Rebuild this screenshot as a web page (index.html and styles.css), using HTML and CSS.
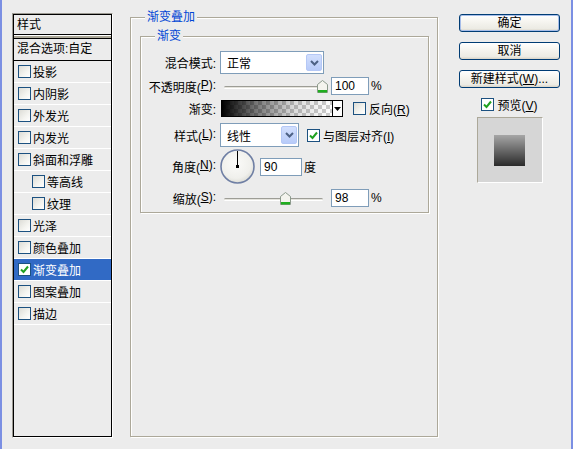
FILE: index.html
```html
<!DOCTYPE html>
<html lang="zh-CN">
<head>
<meta charset="utf-8">
<title>图层样式</title>
<link rel="stylesheet" href="styles.css">
</head>
<body>
<div class="window">
  <div class="panel">
    <div class="panel-in">
      <div class="ph">样式</div>
      <div class="psep"></div>
      <div class="pblend">混合选项:自定</div>
      <ul class="plist">
        <li><span class="cb"></span>投影</li>
        <li><span class="cb"></span>内阴影</li>
        <li><span class="cb"></span>外发光</li>
        <li><span class="cb"></span>内发光</li>
        <li><span class="cb"></span>斜面和浮雕</li>
        <li class="ind"><span class="cb"></span>等高线</li>
        <li class="ind"><span class="cb"></span>纹理</li>
        <li><span class="cb"></span>光泽</li>
        <li><span class="cb"></span>颜色叠加</li>
        <li class="sel"><span class="cb on"><svg viewBox="0 0 11 11" width="11" height="11"><path d="M2 5.5 L4.5 8 L9 2.5" fill="none" stroke="#21a121" stroke-width="2"/></svg></span>渐变叠加</li>
        <li><span class="cb"></span>图案叠加</li>
        <li><span class="cb"></span>描边</li>
      </ul>
    </div>
  </div>

  <fieldset class="grp outer">
    <legend>渐变叠加</legend>
    <fieldset class="grp inner">
      <legend>渐变</legend>
      <div class="row r1">
        <span class="lbl">混合模式:</span>
        <div class="combo w-mode"><span class="ctext">正常</span><span class="cbtn"><svg viewBox="0 0 9 6" width="9" height="6"><path d="M1 1 L4.5 4.5 L8 1" fill="none" stroke="#4d6185" stroke-width="2"/></svg></span></div>
      </div>
      <div class="row r2">
        <span class="lbl">不透明度(<u>P</u>):</span>
        <div class="slider"><div class="track"></div><span class="thumb" style="left:93px"><svg viewBox="0 0 11 13" width="11" height="13"><path d="M0.5 4.5 L5.5 0.5 L10.5 4.5 L10.5 12.5 L0.5 12.5 Z" fill="#f4f4ee" stroke="#8c9a8c"/><rect x="1" y="10" width="9" height="2.5" fill="#1fae1f"/></svg></span></div>
        <span class="field w-num">100</span><span class="unit">%</span>
      </div>
      <div class="row r3">
        <span class="lbl">渐变:</span>
        <div class="grad"><span class="gstrip"></span><span class="gbtn"><svg viewBox="0 0 7 4" width="7" height="4"><path d="M0 0 H7 L3.5 4 Z" fill="#000"/></svg></span></div>
        <span class="cb ml-rev"></span><span class="ctl-text">反向(<u>R</u>)</span>
      </div>
      <div class="row r4">
        <span class="lbl">样式(<u>L</u>):</span>
        <div class="combo w-style"><span class="ctext">线性</span><span class="cbtn"><svg viewBox="0 0 9 6" width="9" height="6"><path d="M1 1 L4.5 4.5 L8 1" fill="none" stroke="#4d6185" stroke-width="2"/></svg></span></div>
        <span class="cb on ml-align"><svg viewBox="0 0 11 11" width="11" height="11"><path d="M2 5.5 L4.5 8 L9 2.5" fill="none" stroke="#21a121" stroke-width="2"/></svg></span><span class="ctl-text">与图层对齐(<u>I</u>)</span>
      </div>
      <div class="row r5">
        <span class="lbl">角度(<u>N</u>):</span>
        <svg class="dial" viewBox="0 0 35 35" width="35" height="35">
          <defs><radialGradient id="dg" cx="0.45" cy="0.4" r="0.65"><stop offset="0" stop-color="#fbfbf9"/><stop offset="0.7" stop-color="#f0f0ec"/><stop offset="1" stop-color="#d8d8d0"/></radialGradient></defs>
          <circle cx="17.5" cy="17.5" r="16.5" fill="url(#dg)" stroke="#6f7fa4" stroke-width="1.6"/>
          <line x1="17.5" y1="17.5" x2="17.5" y2="2" stroke="#000" stroke-width="1"/>
          <rect x="16" y="16" width="3" height="3" fill="#000"/>
        </svg>
        <span class="field w-angle">90</span><span class="unit">度</span>
      </div>
      <div class="row r6">
        <span class="lbl">缩放(<u>S</u>):</span>
        <div class="slider"><div class="track"></div><span class="thumb" style="left:56px"><svg viewBox="0 0 11 13" width="11" height="13"><path d="M0.5 4.5 L5.5 0.5 L10.5 4.5 L10.5 12.5 L0.5 12.5 Z" fill="#f4f4ee" stroke="#8c9a8c"/><rect x="1" y="10" width="9" height="2.5" fill="#1fae1f"/></svg></span></div>
        <span class="field w-num">98</span><span class="unit">%</span>
      </div>
    </fieldset>
  </fieldset>

  <div class="side">
    <button class="btn default">确定</button>
    <button class="btn">取消</button>
    <button class="btn">新建样式(<u>W</u>)...</button>
    <div class="prev-row"><span class="cb on"><svg viewBox="0 0 11 11" width="11" height="11"><path d="M2 5.5 L4.5 8 L9 2.5" fill="none" stroke="#21a121" stroke-width="2"/></svg></span><span class="ctl-text">预览(<u>V</u>)</span></div>
    <div class="preview"><span class="swatch"></span></div>
  </div>
</div>
</body>
</html>
```
FILE: styles.css
```css
* { box-sizing: border-box; }
html, body { margin: 0; padding: 0; }
body {
  width: 573px;
  height: 449px;
  overflow: hidden;
  background: #ececec;
  font-family: "Liberation Sans", "Noto Sans CJK SC", sans-serif;
  font-size: 12px;
  color: #000;
}
u { text-decoration: underline; text-underline-offset: 1px; }

.window {
  display: flex;
  align-items: flex-start;
  height: 449px;
  border-left: 2px solid #7b8fe3;
  border-right: 2px solid #7b8fe3;
}

/* left style list */
.panel {
  margin-left: 10px;
  margin-top: 13px;
  width: 101px;
  height: 425px;
  border: 1px solid;
  border-color: #9c9a92 #fff #fff #9c9a92;
}
.panel-in {
  height: 100%;
  border: 1px solid #000;
}
.ph {
  height: 20px;
  line-height: 20px;
  padding-left: 3px;
  border-bottom: 1px solid #000;
}
.psep {
  height: 3px;
  border-top: 1px solid #fff;
  background: #aca899;
}
.pblend {
  height: 23px;
  line-height: 21px;
  padding-left: 3px;
  border-top: 1px solid #000;
  border-bottom: 1px solid #000;
  white-space: nowrap;
}
.plist {
  list-style: none;
  margin: 0;
  padding: 0;
}
.plist li {
  height: 22px;
  border-bottom: 1px solid #fff;
  display: flex;
  align-items: center;
  padding-left: 4px;
  gap: 2px;
  white-space: nowrap;
}
.plist li.ind { padding-left: 18px; }
.plist li.sel { background: #316ac5; color: #fff; }

/* checkbox */
.cb {
  flex: none;
  display: inline-flex;
  align-items: center;
  justify-content: center;
  width: 13px;
  height: 13px;
  border: 1px solid #1c5180;
  background: linear-gradient(135deg, #dcdcd6 0%, #f4f4f0 60%, #fff 100%);
}
.cb.on { background: #fff; }
.cb svg { display: block; }

/* group boxes */
.grp {
  margin: 0;
  padding: 0;
  min-width: 0;
  border: 1px solid #aca899;
  box-shadow: inset 1px 1px 0 #fff, 1px 1px 0 #fff;
}
.grp legend {
  padding: 0 2px;
  margin-left: 14px;
  line-height: 14px;
  color: #0046d5;
  background: #ececec;
}
.outer {
  margin-left: 17px;
  margin-top: 10px;
  width: 308px;
  height: 427px;
}
.inner {
  margin: 5px 8px 0 9px;
  padding: 8px 0 5px 0;
  display: flex;
  flex-direction: column;
}

.row {
  display: flex;
  align-items: center;
  white-space: nowrap;
}
.r1 { height: 23px; }
.r2 { height: 18px; margin-top: 3px; }
.r3 { height: 17px; margin-top: 5px; }
.r4 { height: 24px; margin-top: 6px; }
.r5 { height: 35px; margin-top: 2px; }
.r6 { height: 18px; margin-top: 5px; }

.lbl {
  flex: none;
  width: 75px;
  margin-right: 4px;
  display: flex;
  justify-content: flex-end;
}

/* combo box */
.combo {
  flex: none;
  height: 100%;
  display: flex;
  align-items: center;
  justify-content: space-between;
  border: 1px solid #7f9db9;
  background: #fff;
  padding: 2px 1px 2px 6px;
}
.w-mode { width: 104px; }
.w-style { width: 79px; }
.cbtn {
  align-self: stretch;
  width: 16px;
  display: flex;
  align-items: center;
  justify-content: center;
  border: 1px solid #b5c8f6;
  border-radius: 2px;
  background: linear-gradient(#d2dffd, #b8cbf9);
}

/* slider */
.slider {
  position: relative;
  flex: none;
  width: 99px;
  height: 18px;
  margin-left: 4px;
}
.track {
  position: absolute;
  left: 0;
  right: 0;
  top: 9px;
  height: 3px;
  border-radius: 2px;
  border-top: 1px solid #9d9d96;
  border-bottom: 1px solid #fff;
  background: #e4e3dc;
}
.thumb {
  position: absolute;
  top: 3px;
  width: 11px;
  height: 13px;
}
.thumb svg { display: block; }

.field {
  flex: none;
  height: 18px;
  line-height: 16px;
  border: 1px solid #7f9db9;
  background: #fff;
  padding-left: 3px;
}
.w-num { width: 38px; margin-left: 8px; }
.w-angle { width: 42px; margin-left: 5px; }
.unit { margin-left: 2px; }

/* gradient picker */
.grad {
  flex: none;
  display: flex;
  width: 122px;
  height: 17px;
  border: 1px solid #000;
  margin-left: 1px;
}
.gstrip {
  flex: 1;
  background-image:
    linear-gradient(to right, #000 0%, rgba(0,0,0,0.55) 30%, rgba(0,0,0,0.15) 65%, rgba(0,0,0,0) 100%),
    conic-gradient(#cdcdcd 25%, #fff 0 50%, #cdcdcd 0 75%, #fff 0);
  background-size: 100% 100%, 8px 8px;
}
.gbtn {
  width: 10px;
  border-left: 1px solid #000;
  background: #fdfdfd;
  display: flex;
  align-items: center;
  justify-content: center;
}
.ml-rev { margin-left: 10px; }
.ml-align { margin-left: 8px; }
.ctl-text { margin-left: 3px; }

.dial { flex: none; display: block; }

/* right column */
.side {
  margin-left: 21px;
  width: 101px;
  padding-top: 14px;
  display: flex;
  flex-direction: column;
  align-items: center;
}
.btn {
  width: 101px;
  height: 18px;
  margin: 0 0 10px 0;
  padding: 0;
  font: inherit;
  color: #000;
  line-height: 16px;
  border: 1px solid #003c74;
  border-radius: 3px;
  background: linear-gradient(#ffffff 0%, #f6f5f0 40%, #ecebe4 85%, #d8d3c6 100%);
}
.btn.default {
  box-shadow: inset 0 0 0 1px #a6bde9;
}
.prev-row {
  margin-top: -1px;
  height: 14px;
  display: flex;
  align-items: center;
  white-space: nowrap;
}
.preview {
  margin-top: 6px;
  width: 66px;
  height: 66px;
  border: 1px solid;
  border-color: #aca899 #fff #fff #aca899;
  background: #d6d6d6;
  display: flex;
  align-items: center;
  justify-content: center;
}
.swatch {
  width: 31px;
  height: 31px;
  background: linear-gradient(#a6a6a6, #2a2a2a);
}
```
